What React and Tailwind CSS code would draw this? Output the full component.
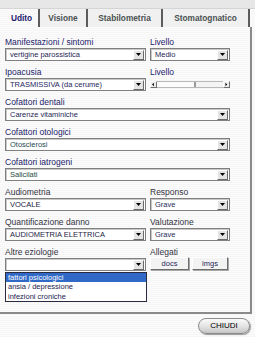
import React from "react";

function Arrow({ dir = "down" }) {
  const pts = {
    down: "1,2 6,2 3.5,5",
    left: "4,1 4,6 1.5,3.5",
    right: "2,1 2,6 4.5,3.5",
  };
  return (
    <svg width="7" height="7" viewBox="0 0 7 7">
      <polygon points={pts[dir]} fill="#000" />
    </svg>
  );
}

function Select({ value, className, color = "text-[#1f2656]" }) {
  return (
    <div
      className={`flex items-center h-[13px] bg-white border border-[#7f7f7f] shadow-[inset_1px_1px_0_#c8c8c8] ${className}`}
    >
      <span className={`flex-1 pl-[4px] text-[7.5px] leading-[11px] truncate ${color}`}>
        {value}
      </span>
      <span className="flex items-center justify-center w-[11px] h-[10px] mr-[1px] bg-[#e4e4e4] border border-t-white border-l-white border-r-[#6b6b6b] border-b-[#6b6b6b]">
        <Arrow />
      </span>
    </div>
  );
}

function Label({ children, color = "text-[#22226a]" }) {
  return (
    <div className={`h-[11px] text-[8.5px] leading-[11px] whitespace-nowrap ${color}`}>
      {children}
    </div>
  );
}

function Slider() {
  return (
    <div className="flex items-center h-[7px] w-[80px] mt-[3px]">
      <span className="flex items-center justify-center w-[7px] h-[7px] bg-[#ececec] border border-t-white border-l-white border-r-[#707070] border-b-[#707070]">
        <Arrow dir="left" />
      </span>
      <div className="flex flex-1 h-[7px] bg-[#f4f4f4] border-t border-b border-[#b8b8b8]">
        <div className="w-[39px] h-full bg-[#fbfbfb] border-r-2 border-[#9a9a9a]" />
        <div className="flex-1" />
      </div>
      <span className="flex items-center justify-center w-[7px] h-[7px] bg-[#ececec] border border-t-white border-l-white border-r-[#707070] border-b-[#707070]">
        <Arrow dir="right" />
      </span>
    </div>
  );
}

function Btn({ children, className }) {
  return (
    <div
      className={`flex items-center justify-center h-[13px] bg-[#f3f3f3] border border-t-white border-l-white border-r-[#6e6e6e] border-b-[#6e6e6e] shadow-[1px_1px_0_#a8a8a8] text-[7.5px] text-[#1f2656] ${className}`}
    >
      {children}
    </div>
  );
}

export default function App() {
  const tabs = [
    { name: "Udito", w: "w-[35px]", active: true },
    { name: "Visione", w: "w-[48px]" },
    { name: "Stabilometria", w: "w-[75px]" },
    { name: "Stomatognatico", w: "w-[87px]" },
  ];

  return (
    <div className="w-[255px] h-[337px] overflow-hidden bg-[repeating-linear-gradient(#f6f6f6_0px,#f6f6f6_1px,#fbfbfb_1px,#fbfbfb_2px)] font-['Liberation_Sans',Arial,sans-serif]">
      {/* top band */}
      <div className="h-[9px] bg-[#e7e7e7] border-b border-[#d4d4d4]" />

      {/* tabs */}
      <div className="flex h-[18px] pl-[5px]">
        {tabs.map((t) => (
          <div
            key={t.name}
            className={`flex items-center justify-center ${t.w} h-full border-r-2 border-[#5c5c5c] text-[8.3px] font-bold ${
              t.active ? "text-[#1c1c70]" : "text-[#4a5050] bg-[#f0f0f0]"
            }`}
          >
            {t.name}
          </div>
        ))}
      </div>

      {/* panel */}
      <div className="w-[252px] h-[287px] border-r-2 border-b-2 border-[#8a8a8a] pl-[5px] pt-[10px]">
        <div className="flex gap-[4px] h-[30px]">
          <div className="w-[141px]">
            <Label>Manifestazioni / sintomi</Label>
            <Select value="vertigine parossistica" className="w-[141px]" />
          </div>
          <div className="w-[80px]">
            <Label>Livello</Label>
            <Select value="Medio" className="w-[80px]" />
          </div>
        </div>

        <div className="flex gap-[4px] h-[30px]">
          <div className="w-[141px]">
            <Label>Ipoacusia</Label>
            <Select value="TRASMISSIVA (da cerume)" className="w-[141px]" color="text-[#26265c]" />
          </div>
          <div className="w-[80px]">
            <Label>Livello</Label>
            <Slider />
          </div>
        </div>

        <div className="h-[30px]">
          <Label>Cofattori dentali</Label>
          <Select value="Carenze vitaminiche" className="w-[225px]" />
        </div>

        <div className="h-[30px]">
          <Label>Cofattori otologici</Label>
          <Select value="Otosclerosi" className="w-[225px]" color="text-[#1d4a55]" />
        </div>

        <div className="h-[30px]">
          <Label>Cofattori iatrogeni</Label>
          <Select value="Salicilati" className="w-[225px]" color="text-[#1e4a42]" />
        </div>

        <div className="flex gap-[4px] h-[30px]">
          <div className="w-[141px]">
            <Label color="text-[#333344]">Audiometria</Label>
            <Select value="VOCALE" className="w-[141px]" color="text-[#1c1c44]" />
          </div>
          <div className="w-[80px]">
            <Label color="text-[#333344]">Responso</Label>
            <Select value="Grave" className="w-[80px]" color="text-[#2a2a5a]" />
          </div>
        </div>

        <div className="flex gap-[4px] h-[30px]">
          <div className="w-[141px]">
            <Label color="text-[#333344]">Quantificazione danno</Label>
            <Select value="AUDIOMETRIA ELETTRICA" className="w-[141px]" color="text-[#1c1c44]" />
          </div>
          <div className="w-[80px]">
            <Label color="text-[#333344]">Valutazione</Label>
            <Select value="Grave" className="w-[80px]" color="text-[#2a2a5a]" />
          </div>
        </div>

        <div className="flex gap-[4px]">
          <div className="relative w-[141px]">
            <Label color="text-[#333344]">Altre eziologie</Label>
            <Select value="" className="w-[141px]" />
            <div className="absolute left-0 top-[25px] w-[142px] bg-white border border-[#2a2a40] text-[7.5px] leading-[9.3px]">
              <div className="pl-[2px] bg-[#3169c6] text-white">fattori psicologici</div>
              <div className="pl-[2px] text-[#1c1c50]">ansia / depressione</div>
              <div className="pl-[2px] text-[#1c1c50]">infezioni croniche</div>
            </div>
          </div>
          <div className="w-[80px]">
            <Label color="text-[#333344]">Allegati</Label>
            <div className="flex gap-[3px] mt-[-1px]">
              <Btn className="w-[39px]">docs</Btn>
              <Btn className="w-[36px]">imgs</Btn>
            </div>
          </div>
        </div>
      </div>

      {/* footer */}
      <div className="flex justify-end pr-[5px] pt-[4px]">
        <div className="flex items-center justify-center w-[52px] h-[16px] rounded-full border border-[#8a8a8a] bg-[linear-gradient(#fafafa,#e2e2e2_55%,#c4c4c4)] shadow-[1px_1px_1px_#9a9a9a] text-[8px] text-black">
          CHIUDI
        </div>
      </div>
    </div>
  );
}
